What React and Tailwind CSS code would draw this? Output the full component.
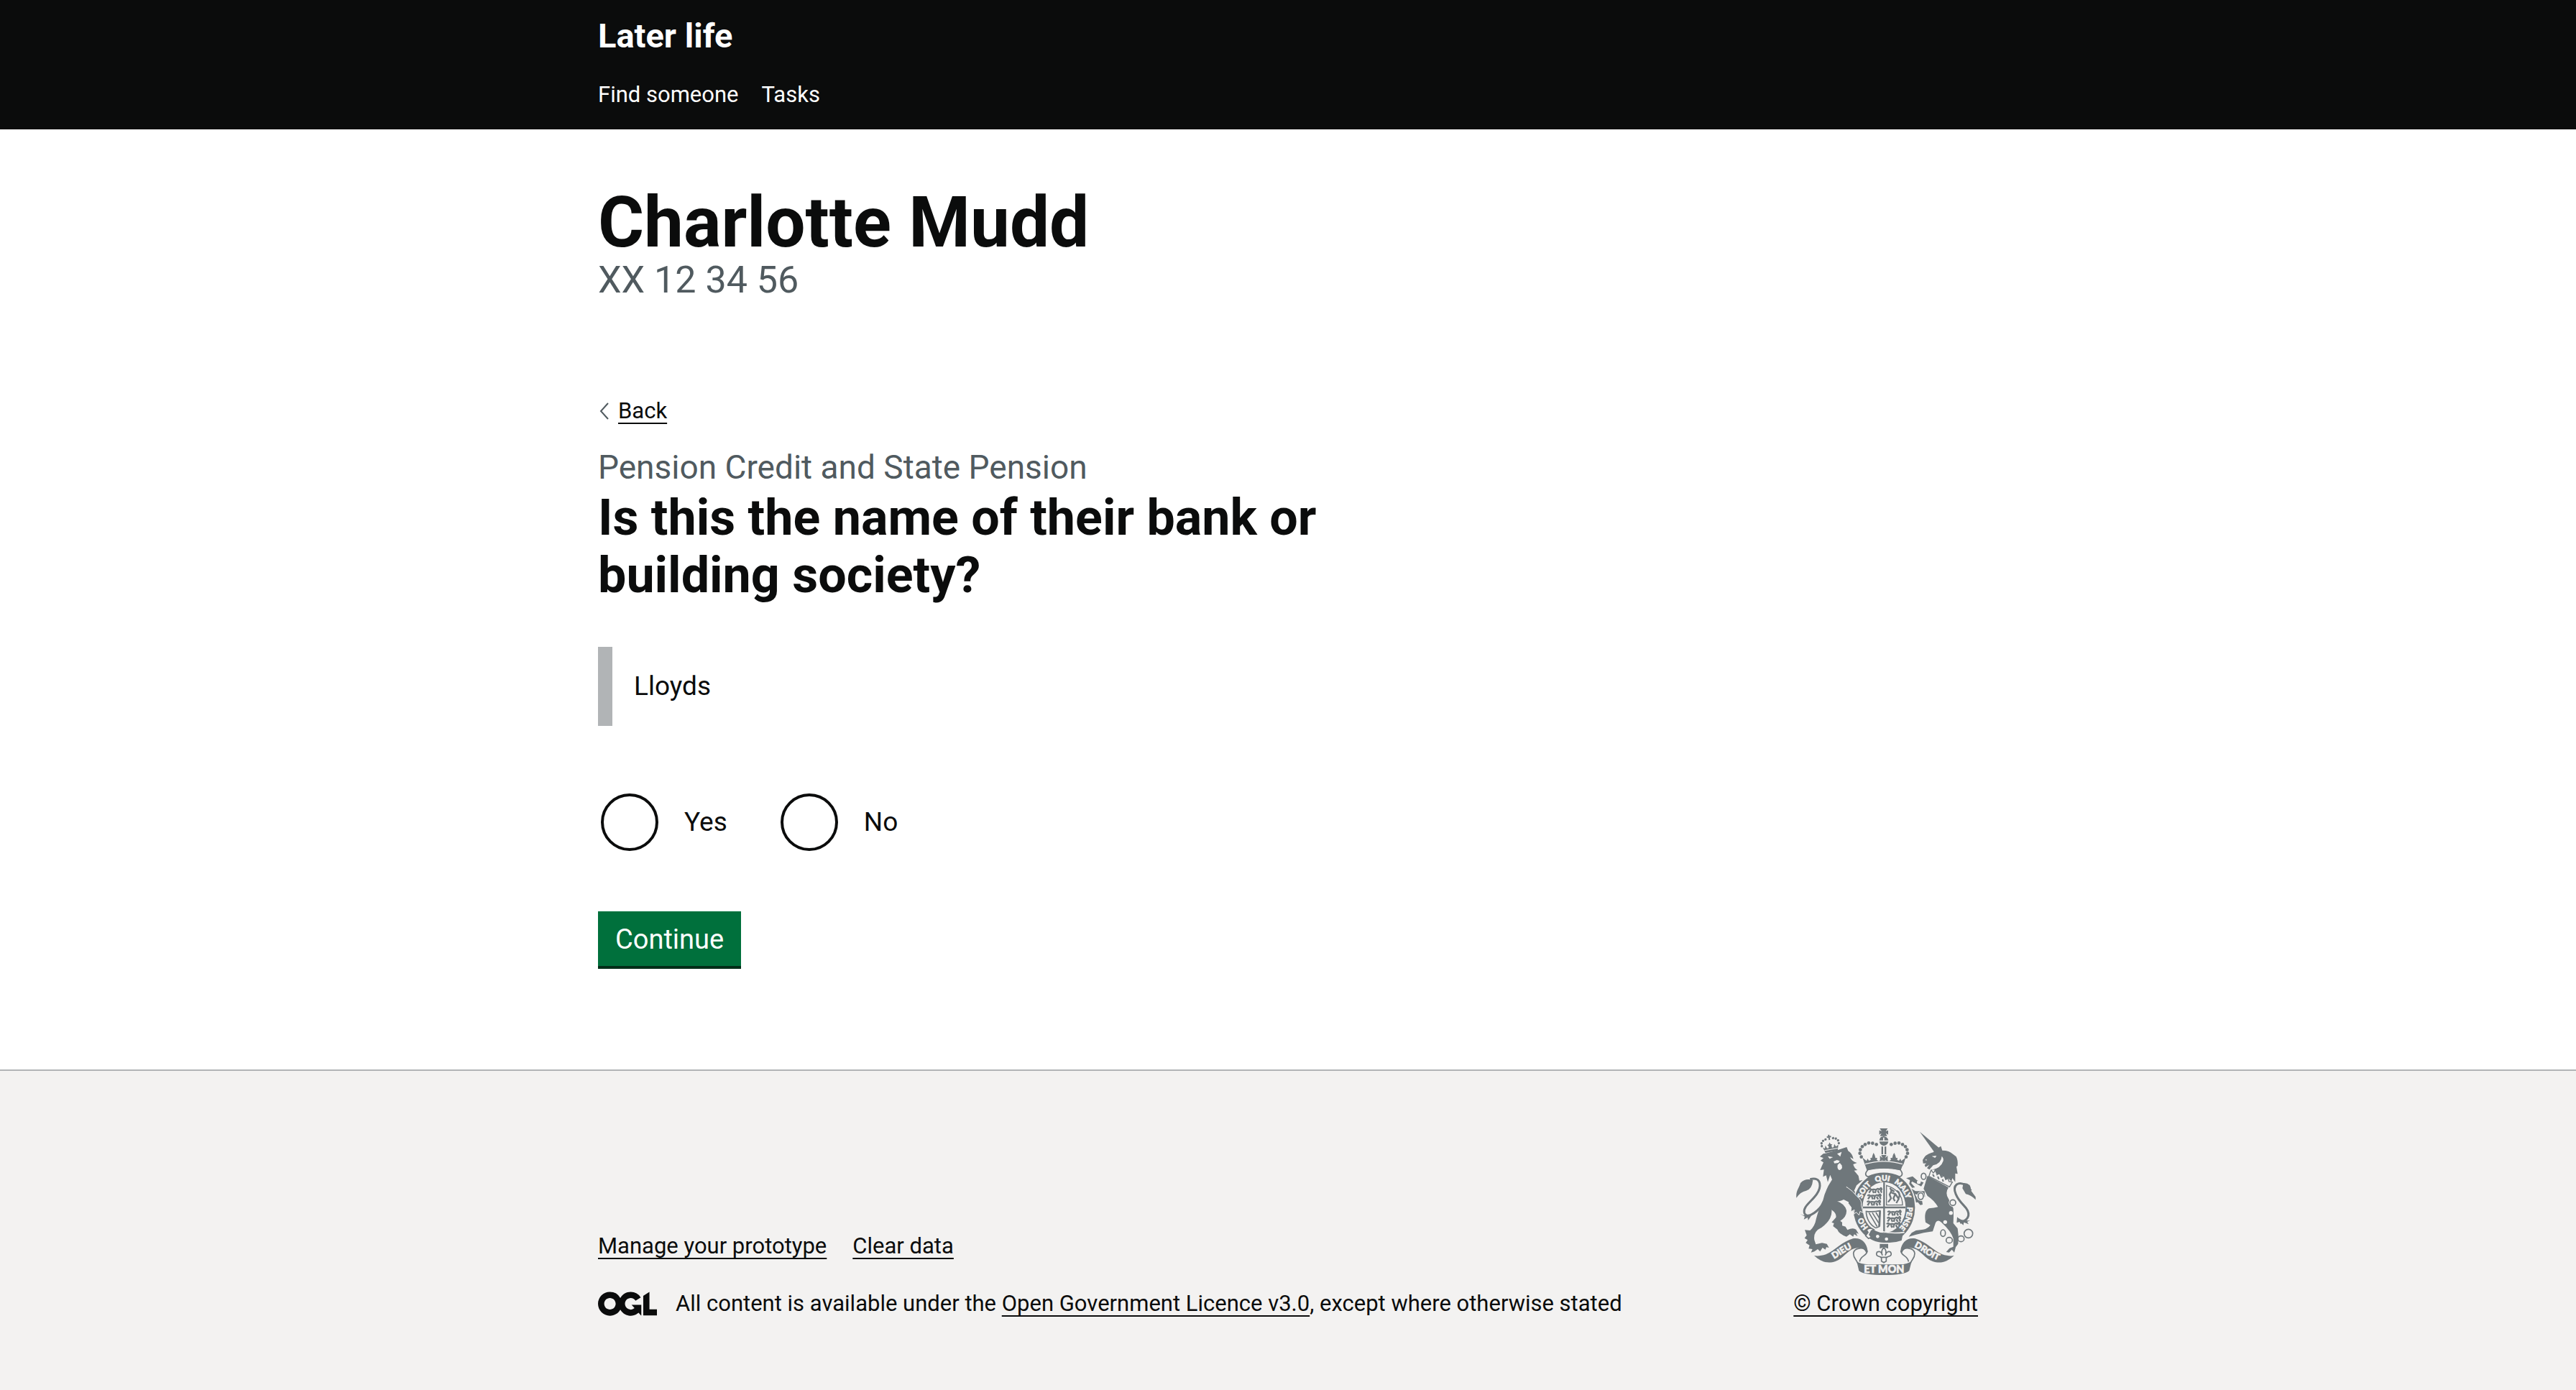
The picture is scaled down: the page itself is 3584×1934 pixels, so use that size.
const container = "mx-auto w-full max-w-[1920px]";
const footerLink =
  "underline decoration-2 underline-offset-[6px] [text-decoration-skip-ink:none] hover:decoration-[6px]";

const INK = "#6f777b";
const PAPER = "#f3f2f1";

function dots(points, r) {
  return points.map(([x, y]) => <circle key={`${x}-${y}`} cx={x} cy={y} r={r} />);
}

/* One of the small walking lions of the shield. */
function Passant({ x, y }) {
  return (
    <path
      transform={`translate(${x} ${y})`}
      d="M2 6 Q8 -2 13 6 Q24 3 34 6 Q42 -2 46 6 M11 9 L4 19 M20 9 L24 20 M32 9 L30 20 M40 9 L46 20 M46 8 Q54 -8 57 4 Q50 12 58 18"
      fill="none"
      stroke={INK}
      strokeWidth="7"
    />
  );
}

function RibbonSide() {
  return (
    <>
      <path d="M183 621 C195 624 214 622 232 616 C270 600 300 562 345 550 C380 544 402 568 406 598 L400 611 C396 592 376 584 352 591 C318 601 306 634 272 645 C240 656 212 648 183 621 Z" />
      <path
        d="M403 605 C394 583 350 586 347 612 C347 634 362 640 364 652 M405 600 C406 622 376 620 373 646"
        fill="none"
        stroke={INK}
        strokeWidth="5"
      />
    </>
  );
}

function CrownCrest() {
  return (
    <svg
      viewBox="108 90 750 612"
      className="h-[204px] w-[250px] font-[Lato,'Liberation_Sans',sans-serif]"
      fill={INK}
      aria-hidden="true"
    >
      <defs>
        <path id="garter" d="M475 532 A97 112 0 0 1 475 308 A97 112 0 0 1 475 532" />
        <path id="motto-left" d="M247 644 C285 630 310 600 362 583" />
        <path id="motto-right" d="M584 580 C632 592 656 628 716 646" />
      </defs>

      {/* Lion crown */}
      <g transform="rotate(-10 250 155)">
        <path d="M224 188 L217 164 L225 170 L229 158 L234 171 L241 171 L242 162 L237 158 L244 156 L248 148 L252 156 L259 158 L254 162 L255 171 L262 171 L267 158 L272 170 L283 164 L276 188 Z" />
        <path d="M222 178 H278" stroke={PAPER} strokeWidth="3" />
        <path d="M250 116 V138 M241 125 H259" stroke={INK} strokeWidth="6" />
        {dots([[214, 158], [215, 146], [223, 137], [234, 133], [266, 133], [277, 137], [285, 146], [286, 158]], 5)}
      </g>

      {/* Lion */}
      <path d="M221 196 Q270 186 319 168 L325 184 Q342 194 347 218 L333 210 Q340 228 362 234 L346 240 Q350 256 364 264 L350 266 L368 288 L372 308 L386 306 L360 328 L350 350 L364 368 L350 400 L334 386 L326 396 L314 382 Q296 396 278 394 Q310 404 318 432 Q320 458 292 476 L300 482 L300 496 L314 500 L322 514 Q345 502 358 512 L369 530 L358 526 L364 540 L350 532 L346 542 L332 532 L318 542 Q286 530 280 512 L262 498 L266 486 L256 482 L274 462 Q278 446 256 430 Q260 470 214 504 Q178 520 184 556 L190 574 L216 568 L236 572 L245 588 L234 586 L230 596 L218 588 L208 604 L198 594 L184 604 L170 608 L176 594 L160 592 L164 578 L148 568 L156 556 L143 548 L152 536 L144 514 L166 516 Q186 500 192 466 Q204 420 220 390 Q230 345 258 304 L250 284 L240 314 L233 286 L220 292 L224 262 L208 264 L222 232 L210 224 L222 214 L207 208 Z" />
      <path
        d="M240 206 L262 210 L248 217 Z M279 196 L298 188 L292 208 Z M264 228 L278 222 L290 226 L284 234 L268 236 Z"
        fill={PAPER}
      />
      <path d="M281 242 Q278 262 290 264 Q304 260 298 244 L290 234 Z" fill={PAPER} />
      <path
        d="M166 302 C218 290 212 338 194 364 C172 396 136 416 142 442 C150 468 188 448 218 408"
        fill="none"
        stroke={INK}
        strokeWidth="9"
      />
      <path d="M109 380 C106 350 120 340 126 318 Q146 296 178 306 Q174 344 150 350 Q126 354 109 380 Z M124 446 Q146 460 176 448 L158 474 L156 462 L140 470 L144 458 Z" />

      {/* Unicorn */}
      <path d="M624 104 L703 170 L684 188 Z" />
      <path d="M680 190 L700 172 L712 164 L718 182 Q748 182 760 196 L776 208 Q784 224 782 246 L777 250 L782 280 L772 278 L772 314 L760 298 L756 312 L742 296 L728 306 L722 288 L706 294 L696 278 L682 276 L686 262 L670 264 Q712 258 722 226 Q724 214 716 206 Q714 236 680 244 L664 262 L654 256 L664 242 L648 252 L644 242 L652 236 L638 236 L636 222 Q648 198 672 192 Z" />
      <path d="M674 206 L694 204 L688 213 Z M646 222 L652 218 L653 224 Z" fill={PAPER} />
      <path
        d="M668 272 L672 264 L680 276 L690 266 L696 284 L706 276 L714 294 L726 288 L732 304 L742 298 L746 312 L760 314 L748 334 L662 290 Z"
        fill={PAPER}
        stroke={INK}
        strokeWidth="4"
      />
      <path d="M678 282 L684 292 M699 291 L704 302 M719 302 L722 312" stroke={INK} strokeWidth="6" />
      <path d="M656 288 L744 337 Q728 360 744 384 L764 424 Q766 452 764 486 L782 508 Q788 540 784 572 L774 586 L768 608 L758 596 L746 608 L734 606 L748 590 L764 584 L764 550 Q756 520 714 482 Q698 468 690 484 L678 520 L640 526 Q606 534 578 542 L590 526 L608 516 L638 512 Q658 508 668 494 L648 482 Q640 436 662 424 Q684 422 700 418 Q684 390 656 372 L640 342 Z" />
      <path d="M567 298 L594 290 L612 306 L640 316 L630 332 L604 318 L592 312 L588 318 L604 336 L592 338 L580 322 L583 306 Z M644 352 L606 352 L590 342 L582 352 L590 366 L604 386 L608 400 L616 398 L626 410 L636 408 L634 394 L616 388 L604 364 L646 376 Z" />
      <path
        d="M792 484 C834 470 838 442 808 412 C780 384 756 342 778 324 C800 310 820 328 838 350"
        fill="none"
        stroke={INK}
        strokeWidth="9"
      />
      <path d="M806 318 Q838 316 838 350 L857 376 V388 Q838 368 816 364 L802 340 Z M780 460 Q796 478 834 474 L822 480 L828 490 L808 482 L806 494 L790 480 L778 484 Z" />
      <g fill={PAPER}>
        <circle cx="754" cy="443" r="8" />
        <circle cx="730" cy="481" r="8" />
        <circle cx="620" cy="314" r="8" />
      </g>
      <g fill="none" stroke={PAPER} strokeWidth="10">
        <ellipse cx="628" cy="373" rx="11" ry="14" />
        <circle cx="762" cy="400" r="12" />
      </g>
      <g fill={PAPER} stroke={INK} strokeWidth="5">
        <ellipse cx="640" cy="290" rx="10" ry="13" />
        <ellipse cx="628" cy="373" rx="11" ry="14" />
        <circle cx="762" cy="400" r="12" />
        <ellipse cx="721" cy="527" rx="10" ry="14" />
        <ellipse cx="747" cy="557" rx="13" ry="12" />
        <ellipse cx="796" cy="551" rx="13" ry="12" />
        <circle cx="827" cy="529" r="18" />
      </g>

      {/* Garter and shield */}
      <ellipse cx="475" cy="420" rx="134" ry="151" fill={PAPER} />
      <ellipse cx="475" cy="420" rx="129" ry="147" />
      <ellipse cx="475" cy="420" rx="90" ry="106" fill={PAPER} />
      <g stroke={INK} fill="none">
        <path d="M475 315 V524 M387 420 H564" strokeWidth="7" />
        <path d="M485 328 V410 H552 Q552 350 485 328 Z" strokeWidth="4" />
        <path
          d="M492 398 L504 382 L498 366 L506 350 L500 338 M506 358 L522 364 L536 384 L526 402 M506 346 L518 354 M522 364 L514 382 L520 394 M534 382 Q544 372 536 356 L528 350"
          strokeWidth="7"
        />
        <path
          d="M398 436 Q424 440 458 434 L454 500 L440 506 Q402 484 400 436 M412 442 L446 500 M426 442 L452 484 M441 441 L456 466"
          strokeWidth="5"
        />
        <path d="M458 434 L455 500" strokeWidth="8" />
      </g>
      <Passant x={408} y={340} />
      <Passant x={404} y={366} />
      <Passant x={402} y={392} />
      <Passant x={488} y={434} />
      <Passant x={486} y={460} />
      <Passant x={484} y={484} />
      <path d="M404 508 Q475 552 556 520 L548 558 Q475 584 404 536 Z" />
      <path d="M428 505 Q476 534 560 524" fill="none" stroke={PAPER} strokeWidth="5" />
      <circle cx="448" cy="541" r="7" fill={PAPER} />
      <circle cx="485" cy="552" r="7" fill={PAPER} />
      <path
        d="M432 512 L416 504 L402 514 L408 524 L398 538 L410 550 L422 544 L414 534 L422 518 Z"
        fill={PAPER}
        stroke={INK}
        strokeWidth="5"
      />
      <g fill={PAPER} stroke={PAPER} strokeWidth="2" fontWeight="900" fontSize="31" textAnchor="middle">
        <text><textPath href="#garter" startOffset="15%">HO</textPath></text>
        <text><textPath href="#garter" startOffset="36%">SOIT</textPath></text>
        <text><textPath href="#garter" startOffset="49%">QUI</textPath></text>
        <text><textPath href="#garter" startOffset="63%">MALY</textPath></text>
        <text><textPath href="#garter" startOffset="82%">PENSE</textPath></text>
      </g>
      {/* Lion forepaw over the garter */}
      <path
        d="M318 334 Q344 350 362 374 Q384 390 380 412 L388 442 L375 436 L370 452 L359 440 L348 448 L351 430 L336 438 L338 420 L326 404 Z"
        stroke={PAPER}
        strokeWidth="3"
      />
      <path d="M300 320 L322 340 L346 384 L332 400 L300 384 Z" />

      {/* Central crown */}
      <path d="M457 90 L490 90 L482 102 L492 98 L492 116 L482 110 L488 122 L458 122 L464 110 L455 116 L455 98 L465 102 Z" />
      <path d="M470 122 H477 V128 H470 Z M455 140 Q458 124 471 124 V140 Z M476 124 Q490 126 493 140 H476 Z M455 145 H493 Q490 160 474 163 Q458 160 455 145 Z" />
      <path d="M464 166 H471 V198 H464 Z M477 166 H484 V198 H477 Z" />
      {dots(
        [
          [443, 157], [427, 152], [411, 151], [396, 157], [384, 166], [376, 179], [374, 194], [380, 209],
          [505, 157], [521, 152], [537, 151], [552, 157], [564, 166], [571, 179], [573, 194], [567, 209],
        ],
        7
      )}
      <path
        d="M408 262 Q474 248 542 262 Q560 284 540 292 Q474 262 408 292 Q388 284 408 262 Z"
        fill={PAPER}
        stroke={INK}
        strokeWidth="5"
      />
      <path d="M385 212 L402 226 L406 216 L412 225 L420 221 Q414 211 424 214 Q426 202 431 192 Q438 202 439 214 Q450 211 444 221 L454 227 L460 218 L466 226 L469 220 L458 230 L458 204 L469 214 L463 201 H485 L479 214 L490 204 V230 L479 220 L482 226 L488 218 L494 227 L504 221 Q498 211 509 214 Q510 202 517 192 Q523 202 525 214 Q535 211 529 221 L537 225 L543 216 L547 226 L565 212 L557 238 L550 250 L545 264 Q474 250 403 264 L397 247 Z" />
      <path d="M396 239 Q474 216 552 239" fill="none" stroke={PAPER} strokeWidth="4" />

      {/* Ribbons */}
      <RibbonSide />
      <g transform="translate(950 0) scale(-1 1)">
        <RibbonSide />
      </g>
      <path d="M361 646 Q376 656 410 658 H540 Q574 656 590 644 L580 684 Q560 702 475 702 Q390 702 370 684 Z" />
      <g fill={PAPER} stroke={PAPER} strokeWidth="2" fontWeight="900" fontSize="37" textAnchor="middle">
        <text><textPath href="#motto-left" startOffset="50%">DIEU</textPath></text>
        <text><textPath href="#motto-right" startOffset="50%">DROIT</textPath></text>
        <text x="475" y="693" fontSize="43">ET MON</text>
      </g>

      {/* Fleur-de-lis */}
      <path d="M457 572 H492 V592 L474 586 L457 592 Z" />
      <path
        d="M474 587 Q488 602 480 620 Q488 598 502 606 Q510 620 496 624 L484 628 L484 644 L474 650 L464 644 L464 628 L452 624 Q438 620 446 606 Q462 598 468 620 Q460 602 474 587 Z M458 628 H490"
        fill={PAPER}
        stroke={INK}
        strokeWidth="5"
      />
    </svg>
  );
}

function OglLogo() {
  return (
    <svg viewBox="0 0 483 195" className="h-[34px] w-[82px] shrink-0" fill="#0b0c0c" aria-hidden="true">
      <path d="M421.5 142.8V.1l-50.7 32.3v161.1h112.4v-50.7zm-122.3-9.6A47.12 47.12 0 0 1 221 97.8c0-26 21.1-47.1 47.1-47.1 16.7 0 31.4 8.7 39.7 21.8l42.7-27.2A97.63 97.63 0 0 0 268.1 0c-36.5 0-68.3 20.1-85.1 49.7A98 98 0 0 0 97.8 0C43.9 0 0 43.9 0 97.8s43.9 97.8 97.8 97.8c36.5 0 68.3-20.1 85.1-49.7a97.76 97.76 0 0 0 149.6 25.4l19.4 22.2h3v-87.8h-80l24.3 27.5zM97.8 145c-26 0-47.1-21.1-47.1-47.1s21.1-47.1 47.1-47.1 47.1 21.1 47.1 47.1S123.8 145 97.8 145" />
    </svg>
  );
}

function Radio({ id, label }) {
  return (
    <div className="flex items-center gap-8">
      <input
        type="radio"
        id={id}
        name="bank-name-correct"
        className="m-1 size-20 cursor-pointer appearance-none rounded-full border-4 border-[#0b0c0c] checked:bg-[radial-gradient(circle,#0b0c0c_20px,transparent_21px)]"
      />
      <label htmlFor={id} className="text-[37px] leading-[50px]">
        {label}
      </label>
    </div>
  );
}

export default function App() {
  return (
    <div className="flex min-h-screen flex-col bg-white font-[Roboto,sans-serif] text-[31px] leading-[40px] text-[#0b0c0c]">
      <header className="bg-[#0b0c0c] pt-5 pb-7 text-white">
        <div className={container}>
          <a href="#home" className="block w-fit text-[47px] leading-[60px] font-bold">
            Later life
          </a>
          <nav className="mt-8 flex gap-8">
            <a href="#find">Find someone</a>
            <a href="#tasks">Tasks</a>
          </nav>
        </div>
      </header>

      <main className={`${container} grow pt-20 pb-[140px]`}>
        <h1 className="text-[98px] leading-[100px] font-bold">Charlotte Mudd</h1>
        <p className="text-[52px] leading-[60px] text-[#505a5f]">XX 12 34 56</p>

        <a href="#back" className="mt-[132px] flex w-fit items-center gap-3">
          <svg viewBox="0 0 16 24" className="h-6 w-4" fill="none" stroke="#505a5f" strokeWidth="2" aria-hidden="true">
            <path d="M14 1 L4 12 L14 23" />
          </svg>
          <span className={footerLink}>Back</span>
        </a>

        <form onSubmit={(event) => event.preventDefault()}>
          <p className="mt-7 text-[46px] leading-[60px] text-[#505a5f]">Pension Credit and State Pension</p>
          <h2 id="question" className="max-w-[1260px] text-[70px] leading-[80px] font-bold">
            Is this the name of their bank or
            <br />
            building society?
          </h2>

          <div className="mt-[60px] border-l-[20px] border-[#b1b4b6] py-[30px] pl-[30px] text-[37px] leading-[50px]">
            Lloyds
          </div>

          <div role="radiogroup" aria-labelledby="question" className="mt-[90px] flex gap-[70px]">
            <Radio id="yes" label="Yes" />
            <Radio id="no" label="No" />
          </div>

          <button
            type="submit"
            className="mt-20 cursor-pointer border-b-4 border-[#002d18] bg-[#00703c] px-6 pt-[14px] pb-3 text-[38px] leading-[50px] text-white"
          >
            Continue
          </button>
        </form>
      </main>

      <footer className="border-t-2 border-[#b1b4b6] bg-[#f3f2f1] pt-20 pb-[100px]">
        <div className={`${container} flex items-end justify-between`}>
          <div>
            <div className="flex gap-9">
              <a href="#manage" className={footerLink}>
                Manage your prototype
              </a>
              <a href="#clear" className={footerLink}>
                Clear data
              </a>
            </div>
            <div className="mt-10 flex items-center gap-[26px]">
              <OglLogo />
              <p>
                All content is available under the{" "}
                <a href="#licence" className={footerLink}>
                  Open Government Licence v3.0
                </a>
                , except where otherwise stated
              </p>
            </div>
          </div>
          <div className="flex flex-col items-center gap-5">
            <CrownCrest />
            <a href="#copyright" className={footerLink}>
              © Crown copyright
            </a>
          </div>
        </div>
      </footer>
    </div>
  );
}
